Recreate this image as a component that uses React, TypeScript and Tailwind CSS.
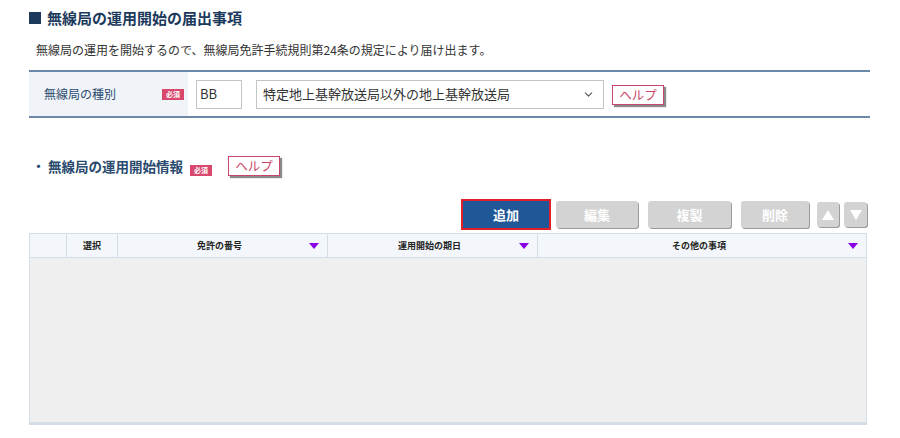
import { ChevronDown } from 'lucide-react';

const font = { fontFamily: '"Noto Sans CJK JP", "Noto Sans", sans-serif' };

function Required() {
  return (
    <span className="inline-flex items-center justify-center w-[22px] h-[11px] bg-[#d8486c] text-white text-[7px] leading-none font-bold">
      必須
    </span>
  );
}

function HelpButton() {
  return (
    <button className="h-[20px] w-[52px] flex items-center justify-center bg-white border border-[#c9456a] text-[#c9456a] text-[12.5px] leading-[18px] shadow-[2px_2px_1px_#8a8a8a]">
      ヘルプ
    </button>
  );
}

function Tri({ up }: { up?: boolean }) {
  return (
    <svg width="14" height="12" viewBox="0 0 14 12">
      <polygon points={up ? '7,1 13,11 1,11' : '1,1 13,1 7,11'} fill="#fff" />
    </svg>
  );
}

function SortMark() {
  return (
    <svg width="10" height="6" viewBox="0 0 10 6" className="shrink-0">
      <polygon points="0,0 10,0 5,6" fill="#8a00e6" />
    </svg>
  );
}

export default function App() {
  return (
    <div className="w-[900px] h-[438px] bg-white text-[#333] overflow-hidden" style={font}>
      <div className="pl-[29px] w-[870px]">
        {/* タイトル */}
        <h1 className="pt-[4px] h-[32px] flex items-center gap-[6px] text-[15px] font-bold text-[#1c3a5c]">
          <span className="w-[12px] h-[12px] bg-[#1c3a5c] inline-block" />
          無線局の運用開始の届出事項
        </h1>
        <p className="pl-[7px] mt-[9px] text-[12px] leading-[18px]">
          無線局の運用を開始するので、無線局免許手続規則第24条の規定により届け出ます。
        </p>

        {/* 種別 */}
        <div className="mt-[11px] border-t-[2px] border-b-[2px] border-[#6b88a8] flex h-[48px]">
          <div className="w-[159px] bg-[#f0f4f8] flex items-center justify-between pl-[15px] pr-[4px] h-full">
            <span className="text-[12px] text-[#2a4a6e]">無線局の種別</span>
            <Required />
          </div>
          <div className="flex items-center pl-[8px] gap-[14px]">
            <div className="w-[46px] h-[29px] border border-[#c4c4c4] flex items-center pl-[3px] text-[13px]">
              BB
            </div>
            <div className="w-[348px] h-[29px] border border-[#c4c4c4] flex items-center justify-between pl-[6px] pr-[8px] text-[13px]">
              特定地上基幹放送局以外の地上基幹放送局
              <ChevronDown size={13} className="text-[#555]" />
            </div>
            <div className="-ml-[6px] mt-[1px]">
              <HelpButton />
            </div>
          </div>
        </div>

        {/* 運用開始情報 */}
        <div className="mt-[37px] flex items-center h-[22px] pl-[3px]">
          <span className="text-[13px] font-bold text-[#2a4a6e]">・</span>
          <span className="ml-[3px] text-[13.5px] font-bold text-[#2a4a6e]">無線局の運用開始情報</span>
          <span className="ml-[7px]"><Required /></span>
          <span className="ml-[16px]"><HelpButton /></span>
        </div>

        {/* ボタン */}
        <div className="mt-[22px] w-[838px] flex justify-end items-center gap-[8px]">
          <div className="border-[2px] border-[#e0202a] p-0 -mr-[3px]">
            <button className="w-[86px] h-[27px] bg-[#1f5797] text-white text-[13px] font-bold leading-none">追加</button>
          </div>
          <button className="w-[82px] h-[27px] rounded-[3px] bg-[#d3d3d3] text-white text-[13px] font-bold shadow-[1px_1px_0_#9a9a9a]">編集</button>
          <button className="w-[83px] h-[27px] ml-[2px] rounded-[3px] bg-[#d3d3d3] text-white text-[13px] font-bold shadow-[1px_1px_0_#9a9a9a]">複製</button>
          <button className="w-[68px] h-[27px] ml-[2px] rounded-[3px] bg-[#d3d3d3] text-white text-[13px] font-bold shadow-[1px_1px_0_#9a9a9a]">削除</button>
          <button className="w-[22px] h-[25px] rounded-[3px] bg-[#d3d3d3] flex items-center justify-center shadow-[1px_1px_0_#9a9a9a]"><Tri up /></button>
          <button className="w-[23px] h-[25px] -ml-[3px] rounded-[3px] bg-[#d3d3d3] flex items-center justify-center shadow-[1px_1px_0_#9a9a9a]"><Tri /></button>
        </div>

        {/* テーブル */}
        <div className="mt-[3px] w-[838px] border border-[#d4dde6] border-b-[3px]">
          <div className="flex h-[24px] bg-[#f3f7fb] border-b border-[#d4dde6] text-[9px] font-bold text-[#222]">
            <div className="w-[37px] border-r border-[#d4dde6]" />
            <div className="w-[51px] border-r border-[#d4dde6] flex items-center justify-center">選択</div>
            <div className="w-[210px] border-r border-[#d4dde6] flex items-center pr-[8px]">
              <span className="flex-1 text-center pl-[12px]">免許の番号</span>
              <SortMark />
            </div>
            <div className="w-[210px] border-r border-[#d4dde6] flex items-center pr-[8px]">
              <span className="flex-1 text-center pl-[12px]">運用開始の期日</span>
              <SortMark />
            </div>
            <div className="flex-1 flex items-center pr-[8px]">
              <span className="flex-1 text-center pl-[12px]">その他の事項</span>
              <SortMark />
            </div>
          </div>
          <div className="h-[164px] bg-[#efefef]" />
        </div>
      </div>
    </div>
  );
}
